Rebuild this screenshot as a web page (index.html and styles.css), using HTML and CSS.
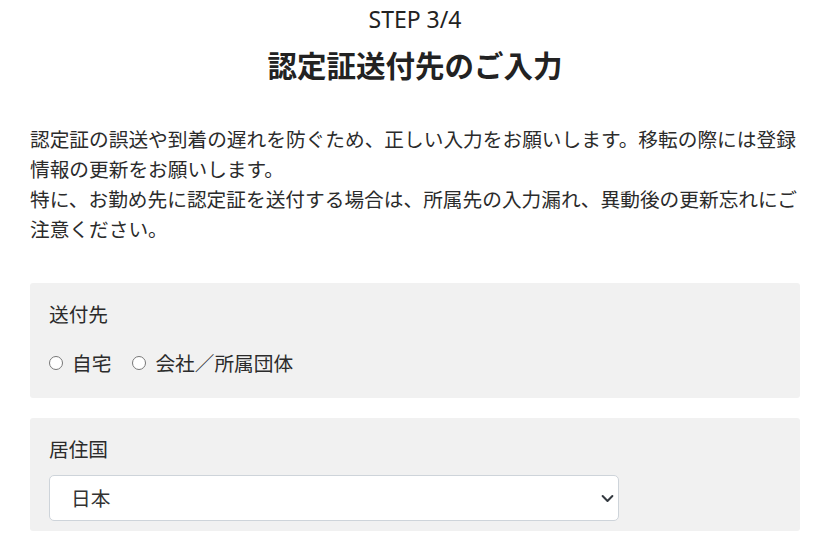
FILE: index.html
```html
<!DOCTYPE html>
<html lang="ja">
<head>
  <meta charset="UTF-8">
  <meta name="viewport" content="width=device-width, initial-scale=1.0">
  <title>認定証送付先のご入力</title>
  <link rel="stylesheet" href="styles.css">
</head>
<body>
  <div class="page">
    <p class="step">STEP 3/4</p>
    <h1 class="title">認定証送付先のご入力</h1>

    <p class="lead">認定証の誤送や到着の遅れを防ぐため、正しい入力をお願いします。移転の際には登録情報の更新をお願いします。<br>特に、お勤め先に認定証を送付する場合は、所属先の入力漏れ、異動後の更新忘れにご注意ください。</p>

    <div class="panel">
      <div class="panel-label">送付先</div>
      <div class="radios">
        <label class="radio"><input type="radio" name="dest" value="home">自宅</label>
        <label class="radio"><input type="radio" name="dest" value="company">会社／所属団体</label>
      </div>
    </div>

    <div class="panel">
      <div class="panel-label">居住国</div>
      <select class="select" name="country">
        <option>日本</option>
      </select>
    </div>
  </div>
</body>
</html>
```

FILE: styles.css
```css
body {
  margin: 0;
  font-family: "Noto Sans", "Noto Sans CJK JP", sans-serif;
  color: #222;
  background-color: #fff;
}

.page {
  width: 770px;
  padding: 2px 0 0 30px;
}

.step {
  margin: 0;
  text-align: center;
  font-size: 23px;
  line-height: 34px;
}

.title {
  margin: 10px 0 0;
  text-align: center;
  font-size: 29.5px;
  line-height: 40px;
  font-weight: bold;
}

.lead {
  margin: 39px 0 0;
  font-size: 19.7px;
  line-height: 30px;
  color: #2b2b2b;
}

.panel {
  margin-top: 20px;
  padding: 18px 19px 10px;
  background-color: #f1f1f1;
  border-radius: 3px;
  font-size: 19.7px;
  color: #2b2b2b;
}

.lead + .panel {
  margin-top: 38px;
}

.panel-label {
  line-height: 27px;
  margin-bottom: 12px;
}

.radios {
  display: flex;
  gap: 21px;
  padding: 9.5px 0 11.5px;
  line-height: 27px;
}

.radio {
  display: flex;
  align-items: center;
  gap: 9px;
}

.radio input {
  margin: 0;
  width: 14px;
  height: 14px;
}

.select {
  display: block;
  width: 570px;
  height: 46px;
  padding: 0 21px;
  border: 1px solid #ced4da;
  border-radius: 5px;
  background-color: #fff;
  font-family: inherit;
  font-size: 19.7px;
  color: #333;
  appearance: none;
  background-image: url("data:image/svg+xml,%3Csvg xmlns='http://www.w3.org/2000/svg' viewBox='0 0 16 16'%3E%3Cpath fill='none' stroke='%23343a40' stroke-linecap='round' stroke-linejoin='round' stroke-width='2.5' d='M2 5l6 6 6-6'/%3E%3C/svg%3E");
  background-repeat: no-repeat;
  background-position: right 4px center;
  background-size: 13px 13px;
}
```
